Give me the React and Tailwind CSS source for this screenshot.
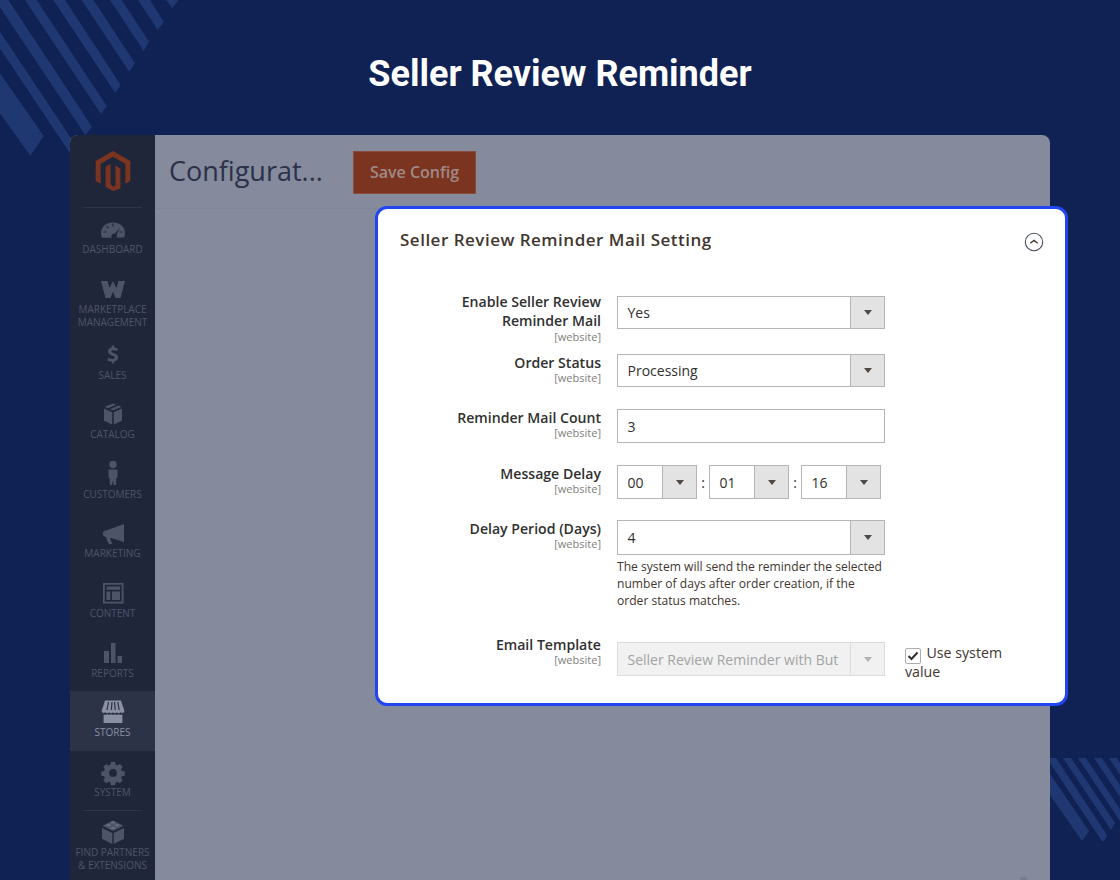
import React from "react";

const C = "#4e5468";

function Ic({ w = 30, h = 28, vb, children, cls = "" }) {
  return (
    <svg width={w} height={h} viewBox={vb || `0 0 ${w} ${h}`} className={cls} fill={C}>
      {children}
    </svg>
  );
}

const icons = {
  dashboard: (
    <Ic>
      <path fillRule="evenodd" d="M4 22.5c-.6-1.6-.9-3-.9-4.6C3.1 11.600 8.400 7.500 15 7.500s11.900 4.100 11.900 10.400c0 1.600-.3 3-.9 4.600h-7.600c.5-1 .7-2 .3-3l3.300-7.200-5 6.300c-1.700-.3-3.400.8-3.600 2.300-.1.700 0 1.300.3 1.900H4z" />
      <path d="M15 8.500v3M8.500 11l1.800 2.200M5.500 17h3M24.500 17h-3" stroke="#20263a" strokeWidth="1.100" />
    </Ic>
  ),
  market: (
    <Ic>
      <path d="M3 6h6.500l2 7 3.500-7 3.500 7 2-7H27l-4.500 17h-5L15 16.500 12.500 23h-5L3 6z" />
    </Ic>
  ),
  sales: (
    <Ic>
      <g transform="translate(2.700 2) scale(.82)">
        <path d="M13.700 3h2.800v2.600c1.900.2 3.400.7 4.500 1.300l-.9 3.200c-1.200-.6-2.900-1.200-4.700-1.200-1.700 0-2.500.6-2.500 1.400 0 .9.900 1.400 3.300 2.200 3.500 1.200 5 2.700 5 5.100 0 2.400-1.700 4.400-4.800 4.900V25h-2.800v-2.300c-2-.1-4-.7-5.200-1.400l.9-3.300c1.300.7 3.100 1.400 5.100 1.400 1.700 0 2.800-.7 2.800-1.700 0-1-.9-1.600-3.100-2.300-3.200-1.100-5.200-2.500-5.200-5.200 0-2.400 1.700-4.300 4.600-4.800V3z" />
      </g>
    </Ic>
  ),
  catalog: (
    <Ic>
      <path d="M15 3.500l3.300 1.200-8.400 3.600-3.200-1.500L15 3.500zM20.600 5.500l3 1.300-8.600 3.800-3-1.400 8.600-3.700zM6 8.500l8.200 3.700v12.300L6 20.700V8.500zM24 8.500v12.200l-8.200 3.800V12.200L24 8.500z" />
    </Ic>
  ),
  customers: (
    <Ic>
      <g transform="translate(0 -2)">
        <circle cx="15" cy="6.500" r="3.700" />
        <path d="M10.500 11.500h9v8.300h-1.300V27h-2.300l-.9-5-.9 5h-2.400v-7.200h-1.200v-8.300z" />
      </g>
    </Ic>
  ),
  marketing: (
    <Ic>
      <path d="M26 5v18l-13-4-1 .1 2.200 5.600-3.300.8-3.100-7.500c-1.800-.3-3-1.400-3-3.200 0-1.900 1.300-3.100 3.400-3.200L26 5z" />
    </Ic>
  ),
  content: (
    <Ic>
      <path fillRule="evenodd" d="M5 4h20.500v20.500H5V4zm1.800 1.800v16.900h16.900V5.800H6.800z" />
      <path d="M8.500 7.500h13.500v3.300H8.500zM8.500 12.500h3.800v8.500H8.500zM14 12.500h8v8.500h-8z" />
    </Ic>
  ),
  reports: (
    <Ic>
      <path d="M6 12h5v12H6zM13 4h4.500v20H13zM19.500 17H24v7h-4.500z" />
    </Ic>
  ),
  stores: (
    <Ic>
      <path fill="#8b90a3" d="M7 2.500h16l3.400 10.500c-.2 1.900-2.400 2.600-3.700 1.300-1.200 1.300-3 1.300-4 0-1 1.300-2.700 1.300-3.700 0-1 1.300-2.700 1.300-3.700 0-1 1.300-2.800 1.300-4 0-1.300 1.300-3.500.6-3.700-1.300L7 2.500z" />
      <path d="M10.500 4l-1.500 8M14 4l-.7 8M16.500 4l.7 8M19.800 4l1.400 8" stroke="#2d3347" strokeWidth="1.200" />
      <path fill="#8b90a3" d="M5.600 16.500c1.300.5 2.600.4 3.800-.2 1.100.7 2.300.7 3.800 0 1.100.7 2.600.7 3.700 0 1.200.7 2.600.7 3.700 0 1.300.6 2.500.7 3.800.2V25H5.600v-8.500z" />
    </Ic>
  ),
  system: (
    <Ic>
      <path fillRule="evenodd" d="M12.700 3h4.600l.6 3.200 2 .8 2.700-1.800 3.200 3.200-1.800 2.700.8 2 3.200.6v4.600l-3.200.6-.8 2 1.800 2.700-3.200 3.200-2.700-1.800-2 .8-.6 3.200h-4.600l-.6-3.200-2-.8-2.700 1.800-3.200-3.200 1.800-2.700-.8-2-3.200-.6v-4.600l3.200-.6.8-2-1.800-2.700 3.200-3.200 2.700 1.800 2-.8.600-3.200zM15 11a4.300 4.300 0 100 8.600 4.300 4.300 0 000-8.600z" transform="translate(1.500 1.200) scale(.9)" />
    </Ic>
  ),
  partners: (
    <Ic>
      <path d="M15 2.500l10.500 5.300-10.500 5.200L4.500 7.800 15 2.500zM4 10l10.300 5.100v11L4 20.800V10zM26 10v10.800l-10.300 5.300v-11L26 10z" />
      <ellipse cx="15" cy="4.600" rx="2.300" ry="1" fill="#6a7084" />
      <ellipse cx="10.700" cy="7.300" rx="2.300" ry="1" fill="#6a7084" />
      <ellipse cx="19.300" cy="7.300" rx="2.300" ry="1" fill="#6a7084" />
      <ellipse cx="15" cy="10" rx="2.300" ry="1" fill="#6a7084" />
    </Ic>
  ),
};

const items = [
  ["dashboard", ["Dashboard"]],
  ["market", ["Marketplace", "Management"]],
  ["sales", ["Sales"]],
  ["catalog", ["Catalog"]],
  ["customers", ["Customers"]],
  ["marketing", ["Marketing"]],
  ["content", ["Content"]],
  ["reports", ["Reports"]],
  ["stores", ["Stores"], true],
  ["system", ["System"]],
];

function NavItem({ icon, lines, active }) {
  return (
    <div className={`flex flex-col items-center pt-[7px] ${lines.length > 1 ? "h-[66px]" : "h-[59.600px]"} ${active ? "bg-[#2d3347]" : ""}`}>
      {icons[icon]}
      <div className={`text-[10px] leading-[13px] uppercase text-center whitespace-nowrap ${active ? "text-[#8b90a3]" : "text-[#4e5468]"}`}>
        {lines.map((l) => (
          <div key={l}>{l}</div>
        ))}
      </div>
    </div>
  );
}

function Arrow({ disabled }) {
  return (
    <svg width="8" height="5" viewBox="0 0 8 5">
      <path d="M0 0h8L4 5z" fill={disabled ? "#b0b0b0" : "#514943"} />
    </svg>
  );
}

function Select({ value, w = "w-[268px]", h = "h-[33px]", arrowW = "w-[34px]", disabled }) {
  return (
    <div className={`flex ${w} ${h} border ${disabled ? "border-[#dcdcdc] bg-[#f1f1f1] text-[#a3a3a3]" : "border-[#b5b5b5] bg-white text-[#303030]"}`}>
      <div className="flex-1 min-w-0 pl-[9.500px] flex items-center text-[14px] whitespace-nowrap">
        {value}
      </div>
      <div className={`${arrowW} shrink-0 flex items-center justify-center border-l ${disabled ? "border-[#dcdcdc] bg-[#f1f1f1]" : "border-[#b5b5b5] bg-[#e3e3e3]"}`}>
        <Arrow disabled={disabled} />
      </div>
    </div>
  );
}

function Label({ lines, offset = "-mt-[1px]", sub = "-mt-[1px]" }) {
  return (
    <div className={`w-[201px] shrink-0 text-right ${offset}`}>
      {lines.map((l) => (
        <div key={l} className="text-[14.100px] leading-[19px] font-semibold text-[#303030]">
          {l}
        </div>
      ))}
      <div className={`text-[11px] leading-[13px] text-[#808080] ${sub}`}>[website]</div>
    </div>
  );
}

function Row({ h, children }) {
  return <div className={`flex gap-[16px] ${h}`}>{children}</div>;
}

function Colon() {
  return <div className="w-[12px] h-[34px] flex items-center justify-center text-[14px] text-[#303030]">:</div>;
}

export default function App() {
  return (
    <div
      className="relative w-[1120px] h-[880px] overflow-hidden bg-[#102254]"
      style={{ fontFamily: '"Open Sans", sans-serif' }}
    >
      <svg className="absolute left-0 top-0" width="190" height="165" viewBox="0 0 570 495" fill="#1f3872">
        <path d="M498 0h37l-18 25z" />
        <path d="M415 0h35l41 65-18 25z" />
        <path d="M330 0h35l82 125-16 28z" />
        <path d="M245 0h35l125 190-17 25z" />
        <path d="M160 0h35l167 255-16 24z" />
        <path d="M75 0h35l210 318-17 24z" />
        <path d="M0 0h25l251 380-20 25L0 22z" />
        <path d="M0 95l230 345-20 20L0 145z" />
        <path d="M0 220l131 188-40 59L0 340z" />
      </svg>
      <svg className="absolute left-[1050px] top-[758px]" width="70" height="90" viewBox="0 0 70 90" fill="#1f3872">
        <path d="M0 16l39 57-7 10L0 37z" />
        <path d="M0 0h6l51 77-3 6h-2L0 5z" />
        <path d="M13 0h8l44 65-4 7z" />
        <path d="M28 0h8l34 51v12z" />
        <path d="M44 0h8l18 27v12z" />
        <path d="M59 0h8l3 5v12z" />
      </svg>

      <div className="relative pt-[53px]">
        <h1
          className="h-[42px] text-center text-white text-[36px] leading-[42px] font-bold"
          style={{ fontFamily: "Roboto, sans-serif" }}
        >
          Seller Review Reminder
        </h1>

        <div className="ml-[70px] mt-[40px] w-[980px] h-[745px] rounded-t-[8px] overflow-hidden flex bg-[#858a9c]">
          <aside className="w-[85px] shrink-0 bg-[#20263a] flex flex-col">
            <div className="h-[72px] flex flex-col items-center justify-end">
              <svg width="40" height="40" viewBox="0 0 24 24" fill="#7a3420" className="mb-[16px]">
                <path d="M12 24l-4.455-2.572v-12l2.970-1.715v12.001L12 21.430l1.485-.716V8.713l2.970 1.715v12L12 24zM22.391 6v12l-2.970 1.714V7.713L12 3.430 4.574 7.713v12L1.609 18V6L12 0l10.391 6z" />
              </svg>
            </div>
            <div className="mx-[13px] h-px bg-[#2f3547]" />
            {items.map(([ic, lines, active]) => (
              <NavItem key={ic} icon={ic} lines={lines} active={active} />
            ))}
            <div className="mx-[13px] h-px bg-[#2f3547]" />
            <NavItem icon="partners" lines={["Find Partners", "& Extensions"]} />
          </aside>
          <main className="flex-1">
            <div className="h-[74px] border-b border-[#7f8496] flex items-start pl-[14px] pt-[16px]">
              <div className="text-[27px] leading-[40px] text-[#2b3148] w-[184px] whitespace-nowrap">Configurat...</div>
              <div className="w-[123px] h-[43px] pb-[2px] bg-[#7a3420] border border-[#8a4a38] flex items-center justify-center text-[16px] font-semibold text-[#a08a87]">
                Save Config
              </div>
            </div>
          </main>
        </div>
      </div>

      <div className="absolute left-[1020px] top-[877px] w-[7px] h-[6px] rounded-full bg-[#777c8e]" />

      <div className="absolute left-[375px] top-[206px] w-[693px] h-[500px] bg-white border-[3px] border-[#1f46f0] rounded-[12px]">
        <div className="flex items-center justify-between pl-[22px] pr-[21px] pt-[18px] h-[46px]">
          <div className="text-[17px] leading-[22px] font-semibold text-[#41362f] tracking-[0.5px] -mt-[2px]">
            Seller Review Reminder Mail Setting
          </div>
          <svg width="20" height="20" viewBox="0 0 20 20" fill="none" className="mt-[1px]">
            <circle cx="10" cy="10" r="8.700" stroke="#4a505c" strokeWidth="1.100" />
            <path d="M6.300 11.300L10 8.400l3.700 2.900" stroke="#41362f" strokeWidth="1.300" />
          </svg>
        </div>

        <div className="pl-[22px] mt-[41px] flex flex-col">
          <Row h="h-[58px]">
            <Label lines={["Enable Seller Review", "Reminder Mail"]} offset="-mt-[4px]" sub="mt-0" />
            <Select value="Yes" />
          </Row>
          <Row h="h-[55px]">
            <Label lines={["Order Status"]} />
            <Select value="Processing" />
          </Row>
          <Row h="h-[56px]">
            <Label lines={["Reminder Mail Count"]} />
            <div className="w-[268px] h-[34px] border border-[#b5b5b5] flex items-center pl-[9.500px] text-[14px] text-[#303030]">
              3
            </div>
          </Row>
          <Row h="h-[55px]">
            <Label lines={["Message Delay"]} />
            <div className="flex">
              <Select value="00" w="w-[80px]" h="h-[34px]" />
              <Colon />
              <Select value="01" w="w-[80px]" h="h-[34px]" />
              <Colon />
              <Select value="16" w="w-[80px]" h="h-[34px]" />
            </div>
          </Row>
          <Row h="h-[122px]">
            <Label lines={["Delay Period (Days)"]} />
            <div className="w-[268px]">
              <Select value="4" h="h-[35px]" />
              <p className="mt-[3px] text-[12.100px] leading-[17px] text-[#41362f]">
                The system will send the reminder the selected number of days after order creation, if the order status matches.
              </p>
            </div>
          </Row>
          <Row h="h-[34px]">
            <Label lines={["Email Template"]} offset="-mt-[7px]" />
            <Select value="Seller Review Reminder with But" h="h-[34px]" disabled />
            <div className="w-[110px] ml-[4px] mt-[1px] text-[14.200px] leading-[19px] text-[#41362f]">
              <span className="inline-flex align-[-3px] -my-[2px] mr-[5.500px] w-[16px] h-[16px] border border-[#adadad] rounded-[2px] items-center justify-center bg-white">
                <svg width="12" height="10" viewBox="0 0 12 10" fill="none">
                  <path d="M1.500 5l3 3 6-6.500" stroke="#303030" strokeWidth="2" />
                </svg>
              </span>
              Use system value
            </div>
          </Row>
        </div>
      </div>
    </div>
  );
}
